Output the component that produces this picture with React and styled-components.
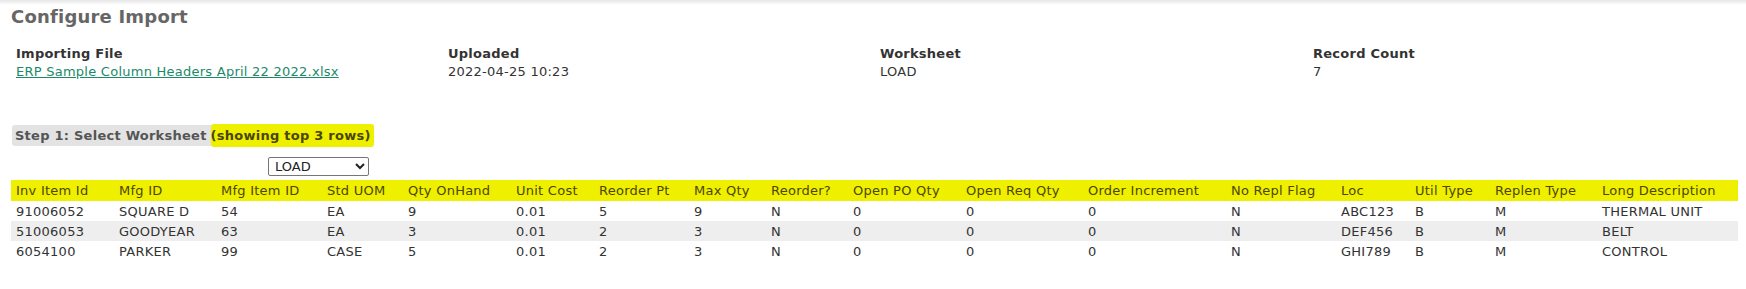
import React from "react";
import styled, { createGlobalStyle } from "styled-components";

const GlobalStyle = createGlobalStyle`
	body {
		margin: 0;
		background: #ffffff;
		font-family: "DejaVu Sans", Verdana, sans-serif;
		font-size: 13px;
		letter-spacing: 0.25px;
		color: #333333;
	}
`;

const Page = styled.div`
	min-height: 289px;
	background: linear-gradient(#e6e6e6, #ffffff 5px);
	padding: 6px 8px 0 10px;
	box-sizing: border-box;
`;

const Title = styled.h1`
	margin: 0 0 0 1px;
	font-size: 18px;
	letter-spacing: 0.2px;
	font-weight: bold;
	color: #666666;
	line-height: 22px;
`;

const InfoGrid = styled.div`
	display: grid;
	grid-template-columns: 432px 432px 433px 1fr;
	margin: 18px 0 0 6px;
`;

const InfoCell = styled.div`
	display: flex;
	flex-direction: column;
	gap: 3px;
	line-height: 15px;
`;

const Label = styled.div`
	font-weight: bold;
	color: #333333;
`;

const Value = styled.div`
	color: #333333;
`;

const FileLink = styled.a`
	color: #1a8a6a;
	text-decoration: underline;
	cursor: pointer;
`;

const StepBar = styled.div`
	display: inline-flex;
	align-items: center;
	margin: 46px 0 0 2px;
	height: 21px;
	padding-left: 3px;
	background: #e3e3e3;
	border-radius: 3px;
	font-weight: bold;
	color: #555555;
`;

const Highlight = styled.span`
	background: #eef000;
	height: calc(100% + 2px);
	display: inline-flex;
	align-items: center;
	margin-left: 4px;
	padding-right: 3px;
	color: #4a4500;
	border-radius: 3px;
`;

const SelectRow = styled.div`
	display: flex;
	padding-left: 258px;
	margin-top: 11px;
`;

const Select = styled.select`
	width: 101px;
	height: 19px;
	font-family: "DejaVu Sans", Verdana, sans-serif;
	font-size: 13px;
	color: #222222;
	border: 1px solid #767676;
	border-radius: 2px;
	background: #ffffff;
	padding: 0 2px;
`;

const Table = styled.table`
	border-collapse: collapse;
	table-layout: fixed;
	width: 1727px;
	margin: 4px 0 0 1px;
`;

const HeadRow = styled.tr`
	background: #eef000;
	height: 21px;
`;

const Row = styled.tr`
	height: 20px;
	background: ${(p) => (p.$alt ? "#eeeeee" : "transparent")};
`;

const Th = styled.th`
	text-align: left;
	font-weight: normal;
	color: #4d4600;
	padding: 0 0 0 5px;
	white-space: nowrap;
`;

const Td = styled.td`
	padding: 0 0 0 5px;
	white-space: nowrap;
	color: #333333;
`;

const widths = [103, 102, 106, 81, 108, 83, 95, 77, 82, 113, 122, 143, 110, 74, 80, 107, 141];

const headers = [
	"Inv Item Id",
	"Mfg ID",
	"Mfg Item ID",
	"Std UOM",
	"Qty OnHand",
	"Unit Cost",
	"Reorder Pt",
	"Max Qty",
	"Reorder?",
	"Open PO Qty",
	"Open Req Qty",
	"Order Increment",
	"No Repl Flag",
	"Loc",
	"Util Type",
	"Replen Type",
	"Long Description",
];

const rows = [
	["91006052", "SQUARE D", "54", "EA", "9", "0.01", "5", "9", "N", "0", "0", "0", "N", "ABC123", "B", "M", "THERMAL UNIT"],
	["51006053", "GOODYEAR", "63", "EA", "3", "0.01", "2", "3", "N", "0", "0", "0", "N", "DEF456", "B", "M", "BELT"],
	["6054100", "PARKER", "99", "CASE", "5", "0.01", "2", "3", "N", "0", "0", "0", "N", "GHI789", "B", "M", "CONTROL"],
];

const App = () => {
	return (
		<>
			<GlobalStyle />
			<Page>
				<Title>Configure Import</Title>
				<InfoGrid>
					<InfoCell>
						<Label>Importing File</Label>
						<FileLink>ERP Sample Column Headers April 22 2022.xlsx</FileLink>
					</InfoCell>
					<InfoCell>
						<Label>Uploaded</Label>
						<Value>2022-04-25 10:23</Value>
					</InfoCell>
					<InfoCell>
						<Label>Worksheet</Label>
						<Value>LOAD</Value>
					</InfoCell>
					<InfoCell>
						<Label>Record Count</Label>
						<Value>7</Value>
					</InfoCell>
				</InfoGrid>
				<StepBar>
					Step 1: Select Worksheet
					<Highlight>(showing top 3 rows)</Highlight>
				</StepBar>
				<SelectRow>
					<Select defaultValue="LOAD">
						<option>LOAD</option>
					</Select>
				</SelectRow>
				<Table>
					<colgroup>
						{widths.map((w, i) => (
							<col key={i} style={{ width: w }} />
						))}
					</colgroup>
					<thead>
						<HeadRow>
							{headers.map((h) => (
								<Th key={h}>{h}</Th>
							))}
						</HeadRow>
					</thead>
					<tbody>
						{rows.map((r, i) => (
							<Row key={i} $alt={i === 1}>
								{r.map((c, j) => (
									<Td key={j}>{c}</Td>
								))}
							</Row>
						))}
					</tbody>
				</Table>
			</Page>
		</>
	);
};

export default App;
